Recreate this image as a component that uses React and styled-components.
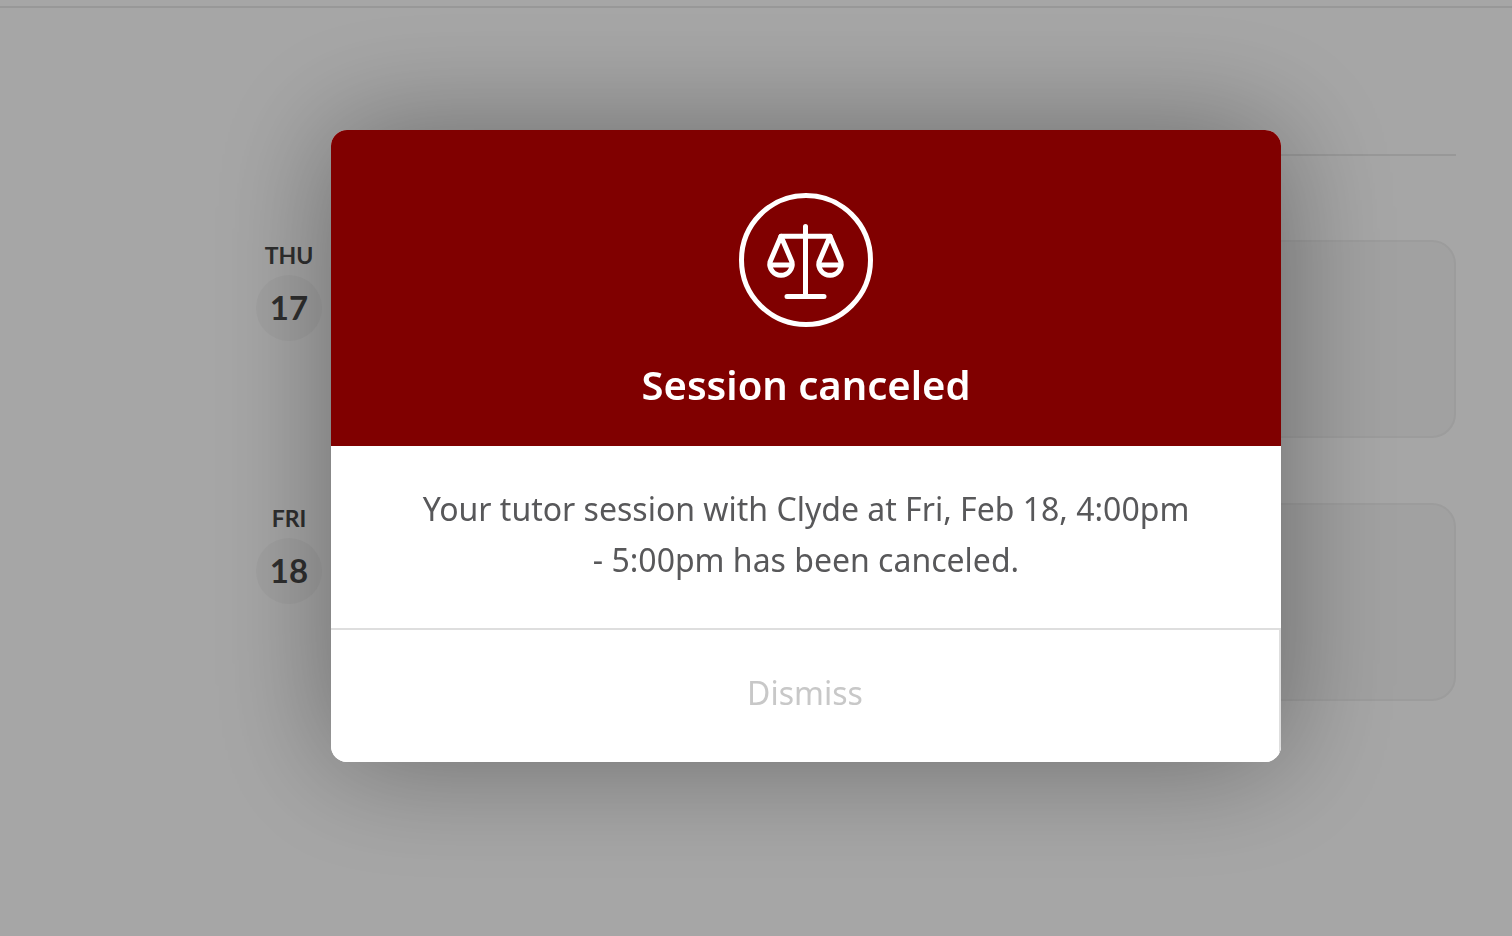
import React, { useState } from "react";
import styled, { createGlobalStyle } from "styled-components";

const GlobalStyle = createGlobalStyle`
  * {
    box-sizing: border-box;
  }

  body {
    margin: 0;
    background: #ffffff;
    color: #484848;
    font-family: "Noto Sans", "Open Sans", sans-serif;
  }
`;

const Page = styled.div`
  min-height: 100vh;
  overflow: hidden;
`;

const TopBar = styled.header`
  height: 8px;
  border-bottom: 2px solid #eaeaea;
`;

const Schedule = styled.main`
  padding: 0 56px 0 256px;
`;

const ScheduleHeader = styled.div`
  height: 148px;
  margin-left: 100px;
  border-bottom: 2px solid #eaeaea;
`;

const DayList = styled.ul`
  list-style: none;
  margin: 0;
  padding: 84px 0 0;
  display: flex;
  flex-direction: column;
  gap: 65px;
`;

const DayRow = styled.li`
  display: flex;
  gap: 34px;
`;

const DayLabel = styled.div`
  width: 66px;
  display: flex;
  flex-direction: column;
  align-items: center;
  gap: 5px;
  font-family: Lato, sans-serif;
  font-weight: 700;
`;

const Weekday = styled.span`
  font-size: 23px;
  line-height: 30px;
`;

const DayNumber = styled.span`
  width: 66px;
  height: 66px;
  padding-bottom: 2px;
  display: flex;
  align-items: center;
  justify-content: center;
  border-radius: 50%;
  background: #f7f7f7;
  font-size: 33px;
  line-height: 40px;
`;

const DayCard = styled.div`
  flex: 1;
  min-height: 198px;
  border: 2px solid #f0f0f0;
  border-radius: 24px;
  background: #f7f7f7;
`;

const Overlay = styled.div`
  position: fixed;
  inset: 0;
  display: flex;
  align-items: center;
  justify-content: center;
  padding: 0 0 44px 100px;
  background: rgba(0, 0, 0, 0.35);
`;

const Dialog = styled.section`
  width: 100%;
  max-width: 950px;
  overflow: hidden;
  border-radius: 16px;
  background: #ffffff;
  box-shadow: 0 0 120px rgba(0, 0, 0, 0.36);
  text-align: center;
`;

const DialogHeader = styled.div`
  display: flex;
  flex-direction: column;
  align-items: center;
  gap: 34px;
  padding: 63px 40px 37px;
  background: #800000;
  color: #ffffff;
`;

const DialogTitle = styled.h1`
  margin: 0;
  font-size: 40px;
  line-height: 48px;
  font-weight: 600;
`;

const DialogText = styled.p`
  margin: 0;
  padding: 37px 84px 43px;
  color: #58585a;
  font-size: 32px;
  line-height: 51px;
`;

const DismissButton = styled.button`
  display: block;
  width: 100%;
  padding: 37px 40px 43px;
  border: 0 solid #dedede;
  border-width: 2px 2px 0 0;
  background: #ffffff;
  color: #c8c8c8;
  font: inherit;
  font-size: 32px;
  line-height: 52px;
  cursor: pointer;
`;

const days = [
  { weekday: "THU", number: 17 },
  { weekday: "FRI", number: 18 },
];

function ScalesIcon() {
  return (
    <svg
      width="134"
      height="134"
      viewBox="0 0 134 134"
      fill="none"
      stroke="#ffffff"
      strokeWidth="5"
      strokeLinecap="round"
      strokeLinejoin="round"
      aria-hidden="true"
    >
      <circle cx="67" cy="67" r="64.5" />
      <path d="M66.5 33.5v70M48 103.500h37M42 43.300h49" />
      <path d="M42 43.300L31 69a11.200 11.200 0 1 0 22 0zM31 72h22" />
      <path d="M91 43.300L80 69a11.200 11.200 0 1 0 22 0zM80 72h22" />
    </svg>
  );
}

export default function App() {
  const [isOpen, setOpen] = useState(true);

  return (
    <Page>
      <GlobalStyle />
      <TopBar />
      <Schedule>
        <ScheduleHeader />
        <DayList>
          {days.map((day) => (
            <DayRow key={day.number}>
              <DayLabel>
                <Weekday>{day.weekday}</Weekday>
                <DayNumber>{day.number}</DayNumber>
              </DayLabel>
              <DayCard />
            </DayRow>
          ))}
        </DayList>
      </Schedule>
      {isOpen && (
        <Overlay>
          <Dialog role="dialog" aria-modal="true" aria-labelledby="dialog-title">
            <DialogHeader>
              <ScalesIcon />
              <DialogTitle id="dialog-title">Session canceled</DialogTitle>
            </DialogHeader>
            <DialogText>
              Your tutor session with Clyde at Fri, Feb 18, 4:00pm - 5:00pm has
              been canceled.
            </DialogText>
            <DismissButton type="button" onClick={() => setOpen(false)}>
              Dismiss
            </DismissButton>
          </Dialog>
        </Overlay>
      )}
    </Page>
  );
}
